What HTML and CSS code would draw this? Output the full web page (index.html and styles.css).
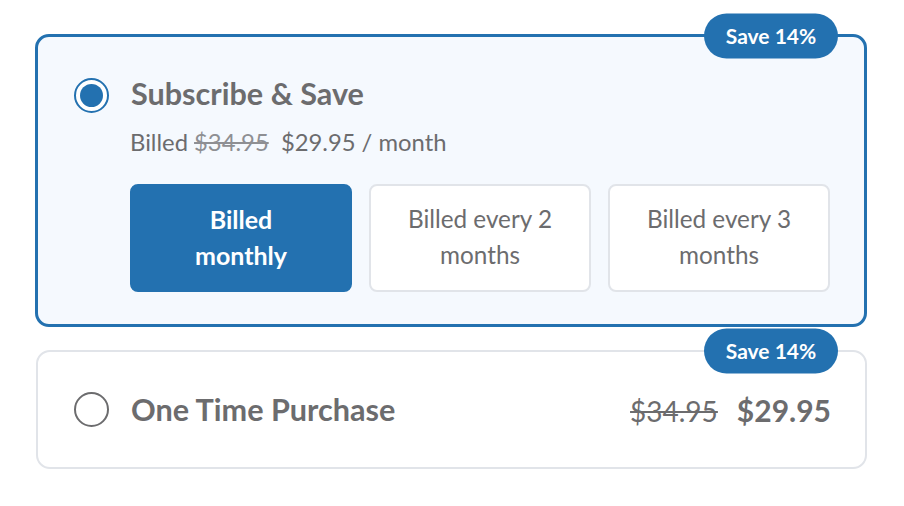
FILE: index.html
```html
<!DOCTYPE html>
<html lang="en">
<head>
<meta charset="utf-8">
<title>Purchase options</title>
<link rel="stylesheet" href="styles.css">
</head>
<body>
<div class="options">
  <div class="card card--active">
    <span class="badge">Save 14%</span>
    <div class="head">
      <span class="radio radio--on"></span>
      <span class="title title--lift">Subscribe &amp; Save</span>
    </div>
    <div class="sub">Billed <s class="old">$34.95</s>&nbsp; $29.95 / month</div>
    <div class="freqs">
      <div class="freq freq--on">Billed<br>monthly</div>
      <div class="freq">Billed every 2<br>months</div>
      <div class="freq">Billed every 3<br>months</div>
    </div>
  </div>
  <div class="card card--plain">
    <span class="badge">Save 14%</span>
    <div class="head">
      <span class="radio"></span>
      <span class="title">One Time Purchase</span>
      <span class="prices"><s class="old2">$34.95</s><b class="new">$29.95</b></span>
    </div>
  </div>
</div>
</body>
</html>
```

FILE: styles.css
```css
html, body {
  margin: 0;
  padding: 0;
  background: #ffffff;
}
body {
  font-family: Lato, "Noto Sans", sans-serif;
  color: #6c6c6e;
}
.options {
  display: flex;
  flex-direction: column;
  gap: 23px;
  padding: 34px 0 0 35px;
  width: 832px;
}
.card {
  position: relative;
  box-sizing: border-box;
  border-radius: 14px;
  background: #ffffff;
}
.card--active {
  border: 3px solid #2371b0;
  background: #f5f9fe;
  padding: 41px 34px 32px 36px;
  height: 293px;
}
.card--plain {
  border: 2px solid #e1e4e9;
  margin-left: 1px;
  width: 831px;
  height: 119px;
  padding: 0 34px 0 36px;
  display: flex;
  align-items: center;
}
.badge {
  position: absolute;
  top: -1px;
  right: 26px;
  transform: translateY(-50%);
  width: 134px;
  height: 45px;
  border-radius: 23px;
  background: #2371b0;
  color: #ffffff;
  font-weight: 700;
  font-size: 21px;
  display: flex;
  align-items: center;
  justify-content: center;
  padding-bottom: 2px;
  box-sizing: border-box;
}
.card--plain .badge { right: 27px; top: -1px; }
.head {
  display: flex;
  align-items: center;
  gap: 22px;
  width: 100%;
}
.radio {
  box-sizing: border-box;
  width: 35px;
  height: 35px;
  flex: 0 0 35px;
  border-radius: 50%;
  border: 2px solid #6c6c6e;
  background: #ffffff;
  position: relative;
}
.radio--on {
  border: 2.5px solid #2371b0;
}
.radio--on::after {
  content: "";
  position: absolute;
  left: 50%;
  top: 50%;
  width: 23px;
  height: 23px;
  margin: -11.5px 0 0 -11.5px;
  border-radius: 50%;
  background: #2371b0;
}
.title {
  font-size: 30.6px;
  font-weight: 700;
  line-height: 35px;
}
.title--lift {
  margin-top: -4px;
}
.sub {
  margin: 14px 0 0 56px;
  font-size: 23.8px;
  line-height: 30px;
}
.old {
  color: #8e8f93;
}
.freqs {
  margin: 27px 0 0 56px;
  display: grid;
  grid-template-columns: repeat(3, 1fr);
  gap: 17px;
}
.freq {
  box-sizing: border-box;
  height: 108px;
  border-radius: 8px;
  border: 2px solid #e1e4e9;
  background: #ffffff;
  display: flex;
  align-items: center;
  justify-content: center;
  text-align: center;
  font-size: 24.3px;
  line-height: 36px;
  padding-bottom: 3px;
}
.freq--on {
  background: #2371b0;
  border-color: #2371b0;
  color: #ffffff;
  font-weight: 700;
  font-size: 25px;
}
.prices {
  margin-left: auto;
  display: flex;
  align-items: baseline;
  gap: 19px;
  font-size: 28px;
}
.old2 {
  color: #6c6c6e;
}
.new {
  font-weight: 700;
  font-size: 30px;
}
```
